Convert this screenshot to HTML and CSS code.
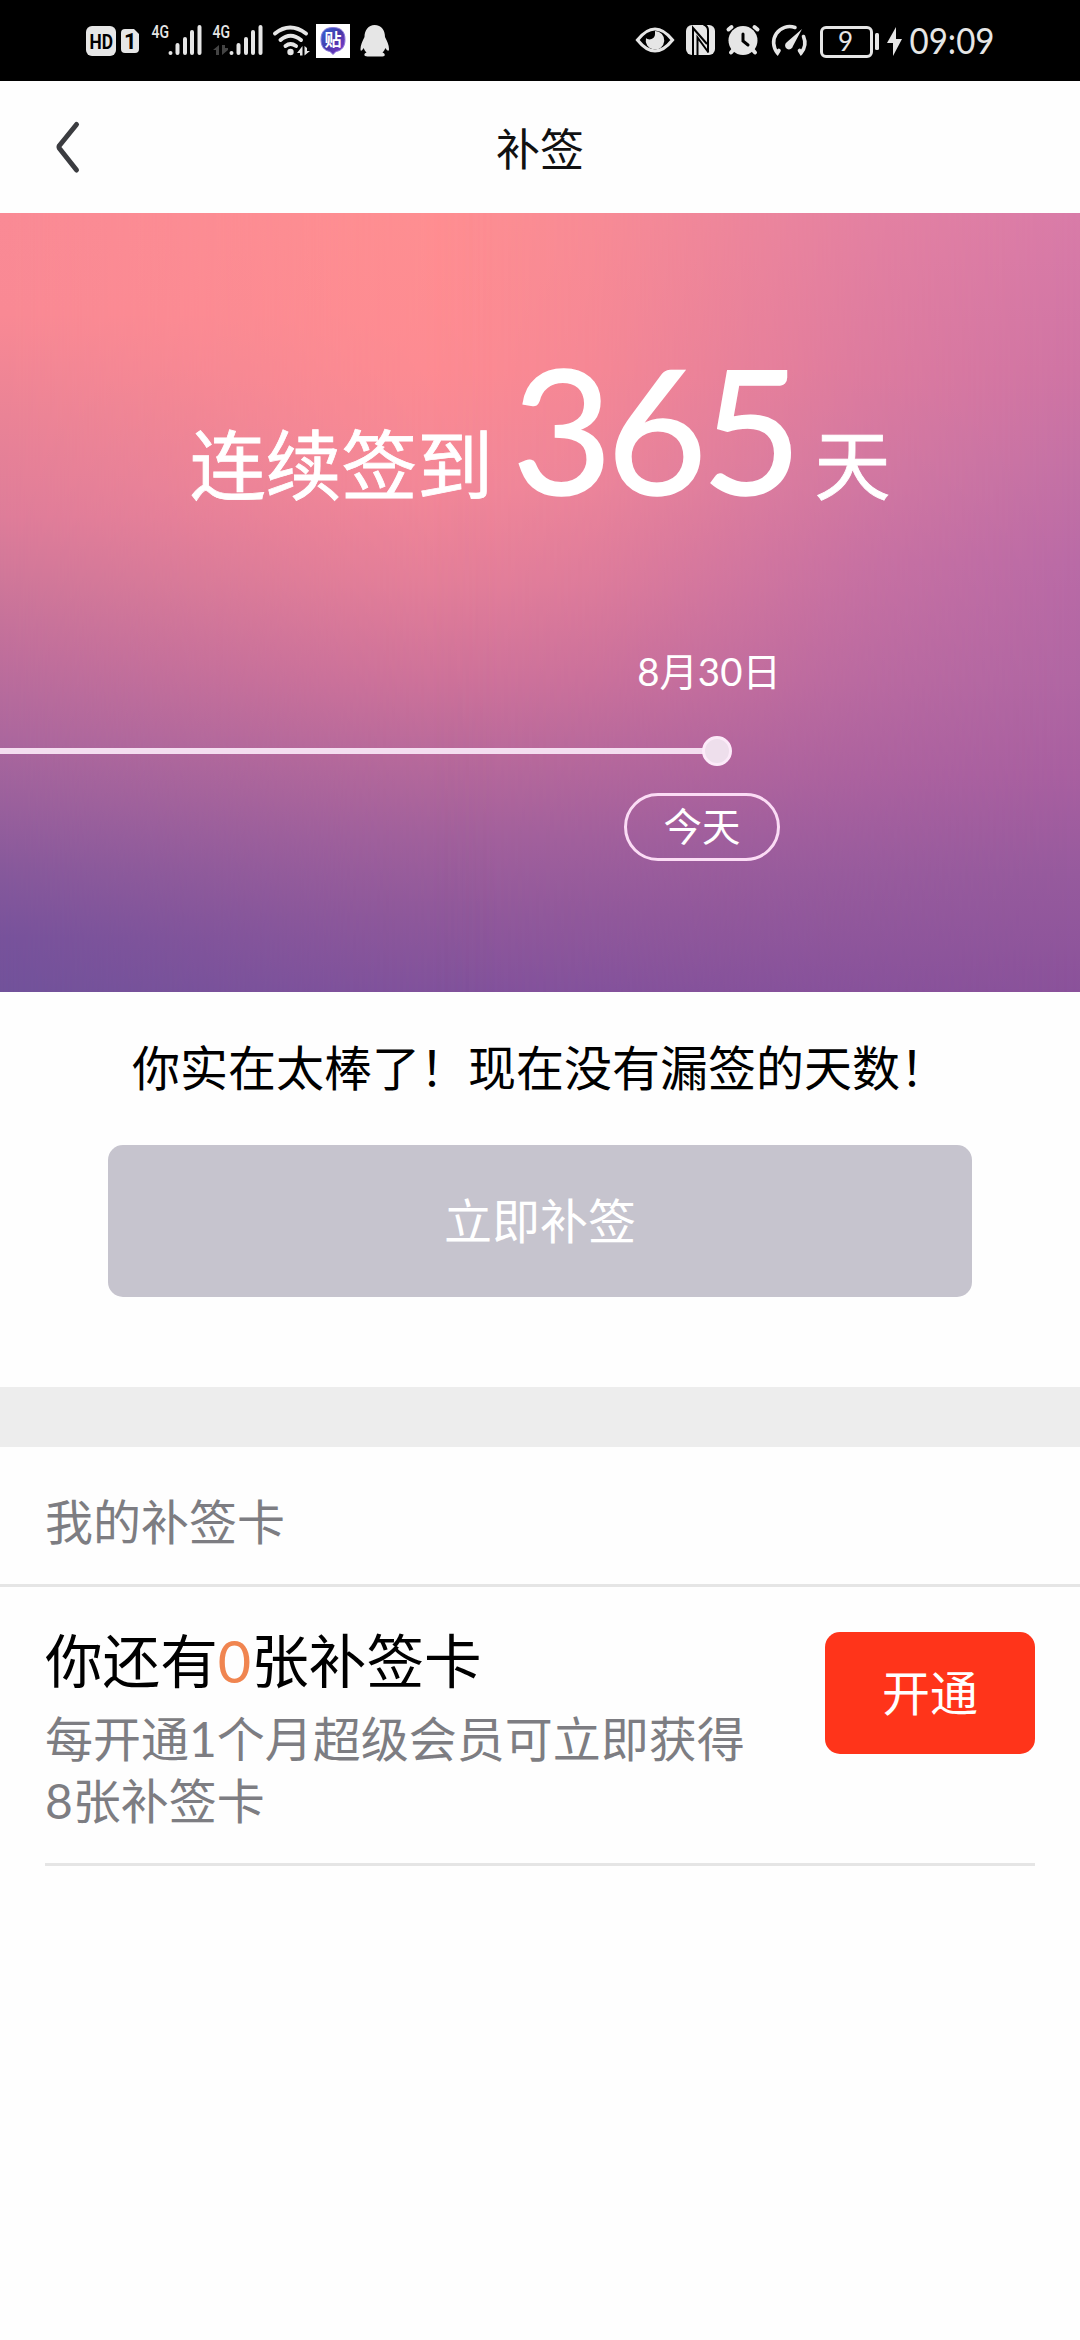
FILE: index.html
```html
<!DOCTYPE html>
<html lang="zh-CN">
<head>
<meta charset="utf-8">
<title>补签</title>
<link rel="stylesheet" href="styles.css">
</head>
<body>
<header class="status">
  <svg class="status-left" width="340" height="81" viewBox="70 0 340 81" fill="#e6e6e6">
    <rect x="86" y="26" width="30" height="30" rx="6"/>
    <text class="hd" x="89.500" y="48.500" textLength="23.500" lengthAdjust="spacingAndGlyphs">HD</text>
    <path d="M125 29h9l5 5v15a4 4 0 0 1-4 4h-10a4 4 0 0 1-4-4V33a4 4 0 0 1 4-4z"/>
    <text class="sim" x="124" y="48.500">1</text>
    <text class="net" x="151.500" y="38" textLength="17.500" lengthAdjust="spacingAndGlyphs">4G</text>
    <g stroke="#e6e6e6" stroke-width="4" stroke-linecap="round"><path d="M170.500 53v.100M177.500 45v8M185 39v14M192 32v21M199.500 27v26"/></g>
    <text class="net" x="212.500" y="38" textLength="17.500" lengthAdjust="spacingAndGlyphs">4G</text>
    <g stroke="#e6e6e6" stroke-width="4" stroke-linecap="round"><path d="M231.500 53v.100M238.500 45v8M246 39v14M253 32v21M260.500 27v26"/></g>
    <path fill="#444" d="M219 45v10h-3v-5h-3zM222 45v10l6-5v-2h-3v-3z"/>
    <g fill="none" stroke="#e6e6e6" stroke-width="4" stroke-linecap="round"><path d="M275 33.500q15-12 31 0M280.500 40q10-8.500 20.500 0M285.500 46q5-4 10.500 0"/></g>
    <circle cx="290.500" cy="52" r="3.200"/>
    <path d="M302.500 46v9.500h-2.500V53h-3zM304.500 46v9.500l5.500-4.500h-3v-3z"/>
    <rect x="316" y="24" width="34" height="34" fill="#fff"/>
    <defs><linearGradient id="tieba" x1="0" y1="0" x2="1" y2="1"><stop offset="0" stop-color="#3468d8"/><stop offset=".5" stop-color="#4638a8"/><stop offset="1" stop-color="#8c3bd0"/></linearGradient></defs>
    <path fill="url(#tieba)" stroke="#8b79dc" d="M333 27.500c8 0 12 4 12 12 0 7-3 11-9 12l-3 3-3-3c-6-1-9-5-9-12 0-8 4-12 12-12z"/>
    <text class="app" x="324.500" y="46">贴</text>
    <path d="M374.500 25c7 0 10.500 5 10.500 12 2 4 4 8 4 12 0 3-2 2-3.500-1-1 2-1.500 3-3 4.500 3 1 3 4 0 4h-15c-4 0-4-3-1-4-1.500-1.500-2-2.500-3-4.500-1.500 3-3 4-3 1 0-4 2-8 4-12 0-7 4-12 10-12z"/>
  </svg>
  <svg class="status-right" width="400" height="81" viewBox="620 0 400 81" fill="#e6e6e6">
    <path fill="none" stroke="#e6e6e6" stroke-width="3.200" d="M637.500 40q17.500-22 35 0q-17.500 22-35 0z"/>
    <path d="M655 31a9.300 9.300 0 1 1-9 7c3 3 9 1 9-4z"/>
    <rect x="686" y="25" width="29" height="30" rx="6"/>
    <path fill="none" stroke="#000" stroke-width="2" d="M693 55V28l14 16M697.500 55V37.500l11 15M703.500 24.500q4.500 1.500 4.500 6v22"/>
    <circle cx="743" cy="40.500" r="14.500"/>
    <path fill="none" stroke="#e6e6e6" stroke-width="4" stroke-linecap="round" d="M728.500 29.500l3-2.500M757.500 29.500l-3-2.500M734 49l-3 3.500M752 49l3 3.500"/>
    <path fill="none" stroke="#000" stroke-width="3" stroke-linecap="round" d="M743 34v7l5 4"/>
    <g fill="none" stroke="#e6e6e6" stroke-width="3.600" stroke-linecap="round"><path d="M795 27.500A16 16 0 0 0 777.500 53l1.500-2.500M803.500 36.500A16 16 0 0 1 801 53l-1.500-2.500"/></g>
    <path d="M802 29l-9 17a4 4 0 1 1-6-4z"/>
    <rect x="821.500" y="27.500" width="50" height="29" rx="4.500" fill="none" stroke="#e6e6e6" stroke-width="3"/>
    <rect x="875" y="33" width="4" height="17" rx="1.500"/>
    <text class="charge" x="838" y="50.500">9</text>
    <path d="M896 27l-9 16h6v13l9-17h-6z"/>
    <text class="time" x="909.500" y="53.500" textLength="85" lengthAdjust="spacingAndGlyphs">09:09</text>
  </svg>
</header>
<nav class="nav">
  <svg class="back" width="28" height="54" viewBox="0 0 28 54" fill="none" stroke="#3b3c40" stroke-width="5" stroke-linecap="round" stroke-linejoin="round"><path d="M23.500 4.500 6.500 25.500Q5.500 27 6.500 28.500L23.500 50"/></svg>
  <h1 class="nav-title">补签</h1>
</nav>
<section class="hero">
  <p class="streak"><span class="unit">连续签到</span><strong class="days">365</strong><span class="unit">天</span></p>
  <div class="day">
    <time class="date">8月30日</time>
  </div>
  <div class="track"><i class="bar"></i><i class="dot"></i></div>
  <div class="day"><span class="today">今天</span></div>
</section>
<section class="resign">
  <p class="praise">你实在太棒了！现在没有漏签的天数！</p>
  <button class="resign-btn" disabled>立即补签</button>
</section>
<h2 class="cards-head">我的补签卡</h2>
<section class="card">
  <div class="card-text">
    <h3 class="card-title">你还有<em class="count">0</em>张补签卡</h3>
    <p class="card-desc">每开通1个月超级会员可立即获得8张补签卡</p>
  </div>
  <button class="open-btn">开通</button>
</section>
</body>
</html>
```
FILE: styles.css
```css
* { box-sizing: border-box; margin: 0; padding: 0; }
body {
  width: 1080px;
  min-height: 2340px;
  background: #fefefe;
  color: #000;
  font-family: Lato, "Noto Sans CJK SC", sans-serif;
  font-size: 48px;
  font-weight: 400;
}
button { border: 0; font: inherit; }
svg { display: block; }

.status {
  display: flex;
  justify-content: space-between;
  height: 81px;
  padding: 0 60px 0 70px;
  background: #000;
}
.status text { font-family: Roboto, sans-serif; font-weight: 700; }
.status .hd { font-size: 21px; fill: #000; }
.status .sim { font-size: 22px; fill: #000; }
.status .net { font-size: 18px; font-weight: 500; }
.status .app { font-family: "Noto Sans CJK SC", sans-serif; font-size: 17px; fill: #fff; }
.status .charge { font-family: Lato, sans-serif; font-size: 26px; font-weight: 400; }
.status .time { font-family: Lato, sans-serif; font-size: 36px; font-weight: 400; }

.nav {
  display: grid;
  grid-template-columns: 53px 1fr 53px;
  align-items: center;
  height: 132px;
}
.back { margin-left: 53px; }
.nav-title {
  padding-top: 3px;
  color: #111;
  font-size: 44px;
  font-weight: 400;
  line-height: 64px;
  text-align: center;
}

.hero {
  position: relative;
  isolation: isolate;
  height: 779px;
  padding-top: 108px;
  background: linear-gradient(#ff8f91, #fe8c92 20%, #f58998 35%, #e57f99 48%, #d0739a 60%, #b96a9b 70%, #a3619c 80%, #91599b 90%, #82529c);
  color: #fff;
}
.hero::before,
.hero::after {
  content: "";
  position: absolute;
  inset: 0;
  z-index: -1;
}
.hero::before {
  background: linear-gradient(#fa8a95, #f98994 13%, #ea8396 26%, #de7c99 39%, #cd7699 48%, #be6e9b 57%, #ac679d 67%, #99609c 76%, #87599b 84%, #77529b 93%, #71529a);
  mask-image: linear-gradient(90deg, #000, rgb(0 0 0 / .6) 16%, rgb(0 0 0 / .2) 32%, transparent 46%);
}
.hero::after {
  background: linear-gradient(#d97ba8, #cf74a4 20%, #c471a5 32%, #b96aa6 45%, #b066a3 60%, #a85fa0 72%, #965a9d 85%, #8a529a);
  mask-image: linear-gradient(90deg, transparent 40%, rgb(0 0 0 / .18) 55%, rgb(0 0 0 / .7) 80%, #000);
}
.streak {
  display: flex;
  align-items: baseline;
  justify-content: center;
  height: 320px;
  font-size: 76px;
  line-height: 220px;
}
.unit {
  letter-spacing: -.200px;
  transform: translateY(-4px);
  -webkit-text-stroke: .800px #fff;
}
.days {
  margin: 0 18px 0 19px;
  font-size: 173px;
  font-weight: 400;
  letter-spacing: -5.500px;
  transform: translateY(-3px);
  -webkit-text-stroke: 1.500px #fff;
}
.day { display: flex; justify-content: center; width: 156px; margin-left: 624px; font-size: 38.400px; }
.date { line-height: 56px; margin: 2px 0 0 14px; white-space: nowrap; }
.track { display: flex; align-items: center; height: 30px; margin: 37px 0 27px; }
.bar { width: 703px; height: 6px; background: #f4def0; }
.dot { width: 30px; height: 30px; margin-left: -1px; border: 3px solid #fcebf9; border-radius: 50%; background: #eedfec; }
.today {
  width: 156px;
  height: 68px;
  border: 3px solid #fbdcf5;
  border-radius: 34px;
  line-height: 61px;
  text-align: center;
}

.resign {
  display: flex;
  flex-direction: column;
  align-items: center;
  height: 455px;
  padding-top: 41px;
  border-bottom: 60px solid #ededed;
}
.praise { height: 112px; line-height: 70px; }
.resign-btn {
  width: 864px;
  height: 152px;
  padding-bottom: 6px;
  border-radius: 15px;
  background: #c6c4ce;
  color: #fff;
}
.cards-head {
  height: 140px;
  padding-left: 45px;
  border-bottom: 3px solid #e5e5e5;
  color: #7d7d82;
  font-size: 48px;
  font-weight: 400;
  line-height: 150px;
}
.card {
  display: flex;
  align-items: flex-start;
  justify-content: space-between;
  height: 279px;
  margin: 0 45px;
  padding-top: 45px;
  border-bottom: 3px solid #e5e5e5;
}
.card-text { width: 710px; }
.card-title { font-size: 57.600px; font-weight: 400; line-height: 76px; margin-top: -9px; }
.count { color: #f08550; font-style: normal; }
.card-desc { color: #7d7d82; line-height: 62px; margin-top: 9px; }
.open-btn {
  width: 210px;
  height: 122px;
  padding-bottom: 6px;
  border-radius: 15px;
  background: #ff341a;
  color: #fff;
}
```
